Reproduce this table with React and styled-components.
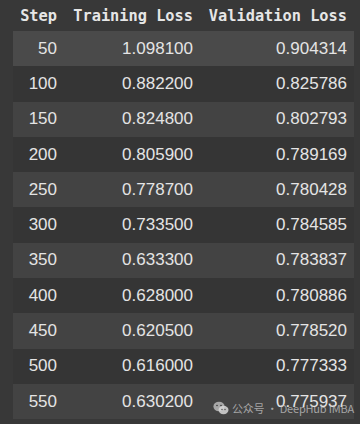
import React from "react";
import styled, { createGlobalStyle } from "styled-components";

const Global = createGlobalStyle`
  html, body { margin: 0; padding: 0; background: #383838; }
  body { width: 360px; height: 424px; overflow: hidden; }
`;

const Page = styled.div`
  position: relative;
  width: 360px;
  height: 424px;
  background: #383838;
  padding: 0 6px 0 13px;
  box-sizing: border-box;
`;

const Table = styled.table`
  border-collapse: collapse;
  width: 341px;
  table-layout: fixed;
`;

const HeadCell = styled.th`
  box-sizing: border-box;
  height: 31px;
  padding: 0 7px 0 0;
  text-align: right;
  font-family: "DejaVu Sans Mono", monospace;
  font-weight: bold;
  font-size: 15.3px;
  color: #e6e6e6;
  white-space: nowrap;
  vertical-align: middle;
  width: ${(p) => p.$w}px;
`;

const Row = styled.tr`
  height: 35.3px;
  background: ${(p) => (p.$first ? "#4a4a4a" : p.$odd ? "#434343" : "#353535")};
`;

const Cell = styled.td`
  padding: 0 7px 0 0;
  text-align: right;
  font-family: "Liberation Sans", Arial, sans-serif;
  font-size: 17px;
  color: #e4e4e4;
  vertical-align: middle;
  white-space: nowrap;
`;

const Watermark = styled.div`
  position: absolute;
  left: 213px;
  top: 400px;
  display: flex;
  align-items: center;
  gap: 3px;
  font-family: "Noto Sans CJK SC", "Noto Sans", sans-serif;
  font-size: 11px;
  letter-spacing: -0.2px;
  color: rgba(200, 200, 200, 0.75);
  white-space: nowrap;
`;

const rows = [
  [50, "1.098100", "0.904314"],
  [100, "0.882200", "0.825786"],
  [150, "0.824800", "0.802793"],
  [200, "0.805900", "0.789169"],
  [250, "0.778700", "0.780428"],
  [300, "0.733500", "0.784585"],
  [350, "0.633300", "0.783837"],
  [400, "0.628000", "0.780886"],
  [450, "0.620500", "0.778520"],
  [500, "0.616000", "0.777333"],
  [550, "0.630200", "0.775937"],
];

const WeChat = () => (
  <svg width="16" height="14" viewBox="0 0 16 14">
    <ellipse cx="6" cy="5.5" rx="5.6" ry="4.8" fill="rgba(200,200,200,0.75)" />
    <ellipse cx="10.5" cy="9" rx="5" ry="4.2" fill="rgba(215,215,215,0.85)" />
    <circle cx="4" cy="4.5" r="0.8" fill="#383838" />
    <circle cx="8" cy="4.5" r="0.8" fill="#383838" />
    <circle cx="9" cy="8.5" r="0.7" fill="#444" />
    <circle cx="12" cy="8.5" r="0.7" fill="#444" />
  </svg>
);

export default function App() {
  return (
    <>
      <Global />
      <Page>
        <Table>
          <thead>
            <tr>
              <HeadCell $w={51}>Step</HeadCell>
              <HeadCell $w={136}>Training Loss</HeadCell>
              <HeadCell $w={154}>Validation Loss</HeadCell>
            </tr>
          </thead>
          <tbody>
            {rows.map((r, i) => (
              <Row key={r[0]} $odd={i % 2 === 0} $first={i === 0}>
                <Cell>{r[0]}</Cell>
                <Cell>{r[1]}</Cell>
                <Cell>{r[2]}</Cell>
              </Row>
            ))}
          </tbody>
        </Table>
        <Watermark>
          <WeChat />
          <span>公众号 · DeepHub IMBA</span>
        </Watermark>
      </Page>
    </>
  );
}
